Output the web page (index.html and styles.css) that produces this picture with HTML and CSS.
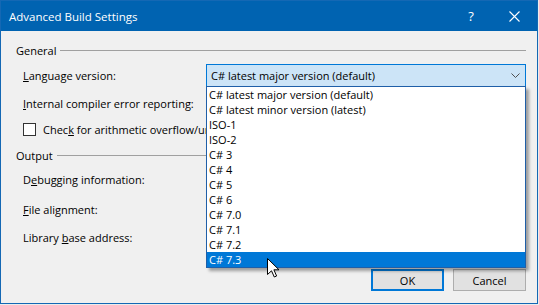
FILE: index.html
```html
<!DOCTYPE html>
<html lang="en">
<head>
  <meta charset="UTF-8">
  <title>Advanced Build Settings</title>
  <link rel="stylesheet" href="styles.css">
</head>
<body>
  <div class="window">
    <div class="titlebar">
      <span class="title">Advanced Build Settings</span>
      <span class="title-btn help">?</span>
      <span class="title-btn close">
        <svg width="11" height="11" viewBox="0 0 11 11"><path d="M0.5 0.5 L10.5 10.5 M10.5 0.5 L0.5 10.5" stroke="#fff" stroke-width="1.1" fill="none"/></svg>
      </span>
    </div>
    <div class="dialog">
      <div class="group-head">General<span class="rule"></span></div>
      <div class="row row-lang">
        <span class="label"><u>L</u>anguage version:</span>
        <div class="combo">
          <span class="combo-text">C# latest major version (default)</span>
          <svg class="chevron" width="9" height="5" viewBox="0 0 9 5"><path d="M0.5 0.5 L4.5 4.5 L8.5 0.5" stroke="#505050" stroke-width="1" fill="none"/></svg>
          <ul class="dropdown">
            <li>C# latest major version (default)</li>
            <li>C# latest minor version (latest)</li>
            <li>ISO-1</li>
            <li>ISO-2</li>
            <li>C# 3</li>
            <li>C# 4</li>
            <li>C# 5</li>
            <li>C# 6</li>
            <li>C# 7.0</li>
            <li>C# 7.1</li>
            <li>C# 7.2</li>
            <li class="selected">C# 7.3</li>
          </ul>
          <svg class="pointer" width="13" height="20" viewBox="0 0 13 20"><path d="M0.5 0.5 L0.5 16.5 L4.5 12.8 L7.3 19 L9.6 18 L6.9 11.8 L12 11.8 Z" fill="#fff" stroke="#000" stroke-width="1" stroke-linejoin="miter"/></svg>
        </div>
      </div>
      <div class="row row-internal">
        <span class="label"><u>I</u>nternal compiler error reporting:</span>
      </div>
      <div class="row row-check">
        <span class="checkbox"></span>
        <span class="label label-clip">Chec<u>k</u> for arithmetic overflow/underflow</span>
      </div>
      <div class="group-head group-output">Output<span class="rule"></span></div>
      <div class="row row-debug">
        <span class="label">D<u>e</u>bugging information:</span>
      </div>
      <div class="row row-file">
        <span class="label"><u>F</u>ile alignment:</span>
      </div>
      <div class="row row-lib">
        <span class="label">Library <u>b</u>ase address:</span>
      </div>
      <div class="buttons">
        <button class="btn btn-default">OK</button>
        <button class="btn">Cancel</button>
      </div>
    </div>
  </div>
</body>
</html>
```

FILE: styles.css
```css
body {
  margin: 0;
  background: #ececec;
  font-family: 'Segoe UI', 'Open Sans', sans-serif;
  font-size: 11px;
  color: #000;
}
.window {
  width: 536px;
  height: 302px;
  border: 1px solid #1468b4;
  background: #f0f0f0;
  display: flex;
  flex-direction: column;
  overflow: hidden;
}
.titlebar {
  height: 30px;
  background: #0063b1;
  color: #fff;
  display: flex;
  align-items: center;
  padding-left: 8px;
  font-size: 11.5px;
}
.title-btn {
  display: flex;
  align-items: center;
  justify-content: center;
  height: 30px;
}
.help {
  margin-left: auto;
  width: 30px;
  margin-right: 5px;
  font-size: 13px;
}
.close {
  width: 46px;
}
.dialog {
  flex-grow: 1;
  display: flex;
  flex-direction: column;
  padding: 11px 11px 0 15px;
}
.group-head {
  height: 16px;
  display: flex;
  align-items: center;
  gap: 4px;
}
.rule {
  flex-grow: 1;
  height: 1px;
  background: #a0a0a0;
}
.group-output {
  margin-top: 6px;
}
.row {
  height: 23px;
  display: flex;
  align-items: center;
  padding-left: 7px;
}
.row-lang {
  margin-top: 6px;
  justify-content: space-between;
}
.row-internal { margin-top: 5px; }
.row-check { margin-top: 3px; }
.row-debug { margin-top: 5px; }
.row-file { margin-top: 7px; }
.row-lib { margin-top: 5px; }
.checkbox {
  width: 11px;
  height: 11px;
  border: 1px solid #333;
  background: #fff;
  margin-right: 7px;
}
.label-clip {
  width: 163px;
  overflow: hidden;
  white-space: nowrap;
}
.combo {
  position: relative;
  width: 314px;
  height: 21px;
  border: 1px solid #0078d7;
  background: #cce4f7;
  display: flex;
  align-items: center;
  padding-left: 4px;
  z-index: 2;
}
.combo-text {
  flex-grow: 1;
}
.chevron {
  margin-right: 5px;
}
.dropdown {
  position: absolute;
  top: 100%;
  left: -1px;
  width: 318px;
  margin: 0;
  padding: 0;
  list-style: none;
  background: #fff;
  border: 1px solid #1f5fa8;
  box-shadow: 3px 3px 3px rgba(0, 0, 0, 0.35);
}
.dropdown li {
  height: 15px;
  line-height: 15px;
  padding-left: 2px;
}
.dropdown li.selected {
  background: #0078d7;
  color: #fff;
}
.pointer {
  position: absolute;
  left: 60px;
  top: 193px;
}
.buttons {
  margin-top: 20px;
  display: flex;
  justify-content: flex-end;
  gap: 9px;
}
.btn {
  width: 73px;
  height: 22px;
  margin: 0;
  padding: 0;
  font-family: inherit;
  font-size: 11px;
  background: #e1e1e1;
  border: 1px solid #adadad;
  color: #000;
}
.btn-default {
  border: 2px solid #0078d7;
}
```
